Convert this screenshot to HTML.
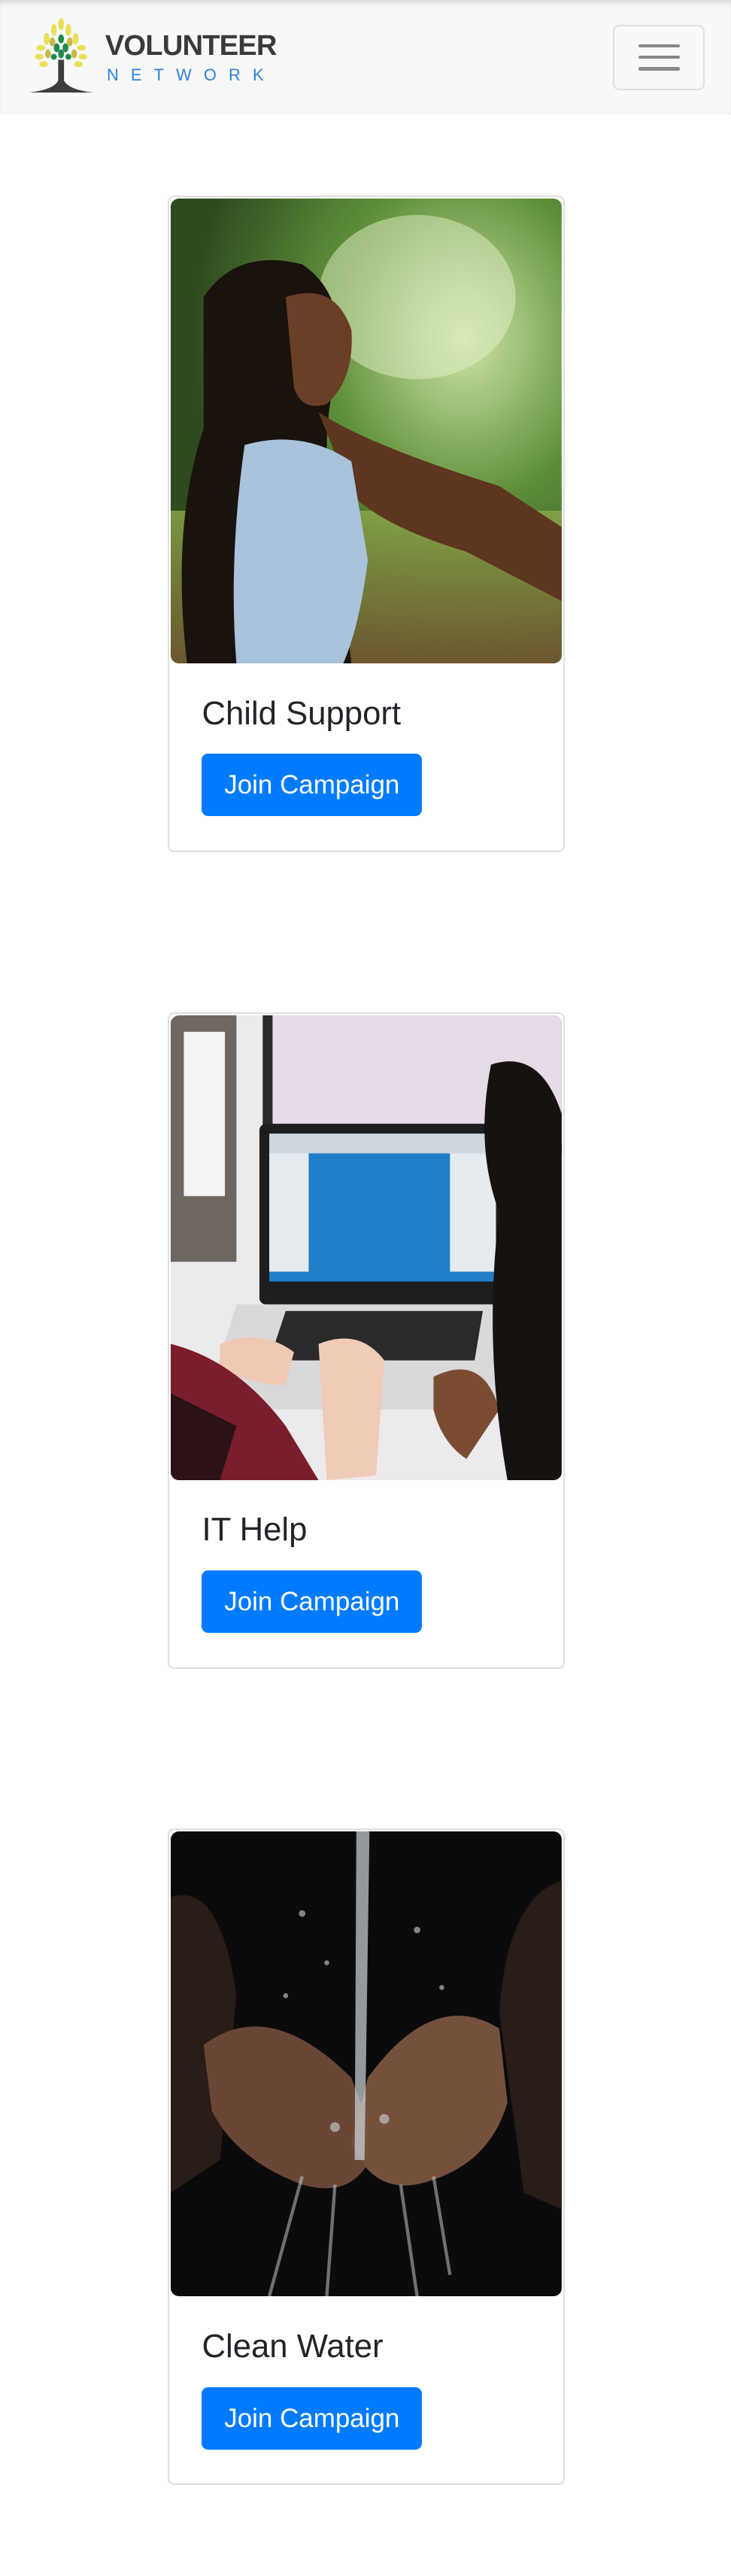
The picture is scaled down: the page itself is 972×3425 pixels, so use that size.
<!DOCTYPE html>
<html><head><meta charset="utf-8">
<style>
html{zoom:2.18427}
body{margin:0;background:#fff;font-family:"Liberation Sans",Roboto,Arial,sans-serif;width:445px;height:1568px;overflow:hidden;position:relative}
.nav{position:absolute;left:0;top:0;width:445px;height:70px;background:#f7f9f8;box-shadow:inset 0 3px 4px -2px rgba(0,0,0,.18)}
.brand1{position:absolute;left:64px;top:18px;font-weight:bold;font-size:17.5px;color:#3a3a3a;letter-spacing:-.4px}
.brand2{position:absolute;left:65px;top:40px;font-size:10px;color:#2f7fd8;letter-spacing:7.4px}
.tog{position:absolute;left:373px;top:15px;width:54px;height:38px;border:1px solid rgba(0,0,0,.1);border-radius:4px}
.tog i{position:absolute;left:15px;width:25px;height:2px;background:#888;border-radius:1px}
.card{position:absolute;left:102px;width:240px;height:398px;border:1px solid rgba(0,0,0,.125);border-radius:4px;background:#fff}
.img{position:absolute;left:1px;top:1px;width:238px;height:283px;border-radius:5px;overflow:hidden}
.img svg{display:block}
.t{position:absolute;left:20px;top:303px;font-size:20px;font-weight:500;color:#212529;margin:0}
.b{position:absolute;left:20px;top:339px;width:134px;height:38px;background:#007bff;border-radius:4px;color:#fff;font-size:16px;line-height:38px;text-align:center}
</style></head><body>
<div class="nav">
<svg style="position:absolute;left:14px;top:9px" width="46" height="49" viewBox="0 0 52 54" preserveAspectRatio="none">
<g fill="#e9df5a"><ellipse cx="26" cy="6" rx="2" ry="4"/><ellipse cx="21" cy="10" rx="2" ry="4"/><ellipse cx="31" cy="10" rx="2" ry="4"/><ellipse cx="16" cy="16" rx="2" ry="4"/><ellipse cx="36" cy="16" rx="2" ry="4"/><ellipse cx="12" cy="22" rx="3" ry="2"/><ellipse cx="40" cy="22" rx="3" ry="2"/><ellipse cx="11" cy="28" rx="3" ry="2"/><ellipse cx="41" cy="28" rx="3" ry="2"/><ellipse cx="14" cy="33" rx="3" ry="2"/><ellipse cx="38" cy="33" rx="3" ry="2"/></g>
<g fill="#c8b949"><ellipse cx="20" cy="18" rx="2" ry="3"/><ellipse cx="32" cy="18" rx="2" ry="3"/><ellipse cx="17" cy="26" rx="2" ry="3"/><ellipse cx="35" cy="26" rx="2" ry="3"/></g>
<g fill="#1d8a4e"><ellipse cx="26" cy="16" rx="2" ry="3"/><ellipse cx="23" cy="22" rx="2" ry="3"/><ellipse cx="29" cy="22" rx="2" ry="3"/><ellipse cx="21" cy="28" rx="2" ry="2"/><ellipse cx="31" cy="28" rx="2" ry="2"/><ellipse cx="26" cy="26" rx="2" ry="3"/></g>
<path d="M24 30 L28 30 L28 44 Q31 50 48 52 L4 52 Q21 50 24 44 Z" fill="#3c3c3c"/>
</svg>
<div class="brand1">VOLUNTEER</div>
<div class="brand2">NETWORK</div>
<div class="tog"><i style="top:11px"></i><i style="top:18px"></i><i style="top:25px"></i></div>
</div>

<div class="card" style="top:119px">
<div class="img"><svg width="238" height="283" viewBox="0 0 238 283">
<defs><radialGradient id="g1" cx=".75" cy=".3" r=".7"><stop offset="0" stop-color="#cfe6a8"/><stop offset=".5" stop-color="#5f8f3a"/><stop offset="1" stop-color="#2e4a1e"/></radialGradient>
<linearGradient id="gr" x1="0" y1="0" x2="0" y2="1"><stop offset="0" stop-color="#8aa84a"/><stop offset="1" stop-color="#7a5a32"/></linearGradient></defs>
<rect width="238" height="283" fill="url(#g1)"/>
<rect y="190" width="238" height="93" fill="url(#gr)" opacity=".8"/>
<ellipse cx="150" cy="60" rx="60" ry="50" fill="#e4f0c8" opacity=".5"/>
<path d="M20 60 Q40 30 80 40 Q110 60 100 110 Q90 150 100 200 L110 283 L10 283 Q0 200 20 140 Z" fill="#1a120c"/>
<path d="M70 60 Q100 50 110 80 Q112 110 95 125 Q80 130 75 115 Z" fill="#6a3f26"/>
<path d="M90 130 Q120 150 200 175 L238 200 L238 245 L180 215 Q130 200 110 180 Z" fill="#5e3620"/>
<path d="M45 150 Q80 140 110 160 L120 220 Q115 260 105 283 L40 283 Q35 220 45 150 Z" fill="#a9c3dc"/>
</svg></div>
<h5 class="t">Child Support</h5>
<div class="b">Join Campaign</div>
</div>

<div class="card" style="top:616px">
<div class="img"><svg width="238" height="283" viewBox="0 0 238 283">
<rect width="238" height="283" fill="#eceaec"/>
<rect x="0" y="0" width="40" height="150" fill="#6e6660"/>
<rect x="8" y="10" width="25" height="100" fill="#f4f4f4"/>
<rect x="56" y="0" width="182" height="85" fill="#2a2a2a"/>
<rect x="62" y="0" width="176" height="78" fill="#e7dbe7"/>
<rect x="54" y="66" width="150" height="110" rx="4" fill="#1e1e1e"/>
<rect x="60" y="72" width="138" height="90" fill="#1f7fc8"/>
<rect x="60" y="72" width="138" height="12" fill="#cfd7df"/>
<rect x="60" y="84" width="24" height="72" fill="#e6ebef"/>
<rect x="170" y="84" width="28" height="72" fill="#e6ebef"/>
<path d="M40 176 L210 176 L238 240 L20 240 Z" fill="#d9d9dc"/>
<path d="M70 180 L190 180 L185 210 L60 210 Z" fill="#2a2a2a"/>
<path d="M30 200 Q55 190 75 205 L70 225 Q50 225 30 215 Z" fill="#efc8b4"/>
<path d="M90 200 Q115 190 130 210 L125 280 L95 283 Z" fill="#f0cbb8"/>
<path d="M0 200 Q40 210 70 250 L90 283 L0 283 Z" fill="#7a1e2c"/>
<path d="M0 230 L40 250 L30 283 L0 283 Z" fill="#2a1216"/>
<path d="M160 220 Q190 205 200 240 L180 270 Q165 260 160 240 Z" fill="#7a4d33"/>
<path d="M195 30 Q225 20 238 60 L238 283 L205 283 Q190 200 200 120 Q185 80 195 30 Z" fill="#161210"/>
</svg></div>
<h5 class="t">IT Help</h5>
<div class="b">Join Campaign</div>
</div>

<div class="card" style="top:1113px">
<div class="img"><svg width="238" height="283" viewBox="0 0 238 283">
<rect width="238" height="283" fill="#0b0b0c"/>
<path d="M0 40 Q30 30 40 100 L30 200 L0 220 Z" fill="#2a1c16"/>
<path d="M238 30 Q205 40 200 110 L215 220 L238 230 Z" fill="#2a1c16"/>
<path d="M20 130 Q60 100 110 150 L125 190 Q115 225 80 215 Q40 200 25 170 Z" fill="#6a4636"/>
<path d="M200 120 Q160 95 120 150 L110 190 Q125 225 160 212 Q195 200 205 165 Z" fill="#75503d"/>
<path d="M113 0 L121 0 L118 200 L112 200 Z" fill="#cfd6dc" opacity=".7"/>
<g fill="#cfd6dc" opacity=".6"><circle cx="80" cy="50" r="2"/><circle cx="95" cy="80" r="1.5"/><circle cx="150" cy="60" r="2"/><circle cx="70" cy="100" r="1.5"/><circle cx="165" cy="95" r="1.5"/><circle cx="100" cy="180" r="3"/><circle cx="130" cy="175" r="3"/></g>
<path d="M80 210 L60 283 M100 215 L95 283 M140 215 L150 283 M160 210 L170 270" stroke="#cfd6dc" stroke-width="2" opacity=".5"/>
</svg></div>
<h5 class="t">Clean Water</h5>
<div class="b">Join Campaign</div>
</div>
</body></html>
